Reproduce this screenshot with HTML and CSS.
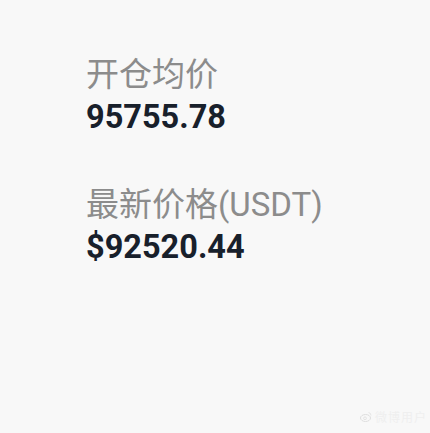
FILE: index.html
```html
<!DOCTYPE html>
<html lang="en">
<head>
    <meta charset="UTF-8">
    <meta name="viewport" content="width=device-width, initial-scale=1.0">
    <title>Position</title>
    <link rel="stylesheet" href="styles.css">
</head>
<body>
    <div class="container">
        <div class="field">
            <div class="label">开仓均价</div>
            <div class="value">95755.78</div>
        </div>
        <div class="field">
            <div class="label">最新价格(USDT)</div>
            <div class="value">$92520.44</div>
        </div>
    </div>
    <div class="watermark">
        <svg class="wm-logo" width="12" height="11" viewBox="0 0 12 11">
            <ellipse cx="5.5" cy="7" rx="5" ry="3.5" fill="none" stroke="#dedede" stroke-width="1"/>
            <circle cx="5" cy="7.3" r="1.4" fill="none" stroke="#dedede" stroke-width="0.8"/>
            <path d="M8.5 1.5 A3 3 0 0 1 11 4.5" fill="none" stroke="#e2e2e2" stroke-width="0.9"/>
        </svg>
        <span class="wm-text">微博用户</span>
    </div>
</body>
</html>
```

FILE: styles.css
```css
body {
    margin: 0;
    padding: 0;
    background-color: #f8f8f8;
    font-family: Roboto, "Noto Sans CJK SC", sans-serif;
}

.container {
    padding: 54px 0 0 86px;
    display: flex;
    flex-direction: column;
    gap: 46px;
}

.label {
    font-size: 33px;
    line-height: 42px;
    color: #8c8c8c;
}

.value {
    font-size: 32.5px;
    line-height: 42px;
    font-weight: 700;
    color: #18202b;
}

.watermark {
    position: absolute;
    right: 3px;
    bottom: 8px;
    display: flex;
    align-items: center;
    gap: 3px;
}

.wm-text {
    font-size: 12px;
    color: #efefef;
    letter-spacing: 1px;
}
```
